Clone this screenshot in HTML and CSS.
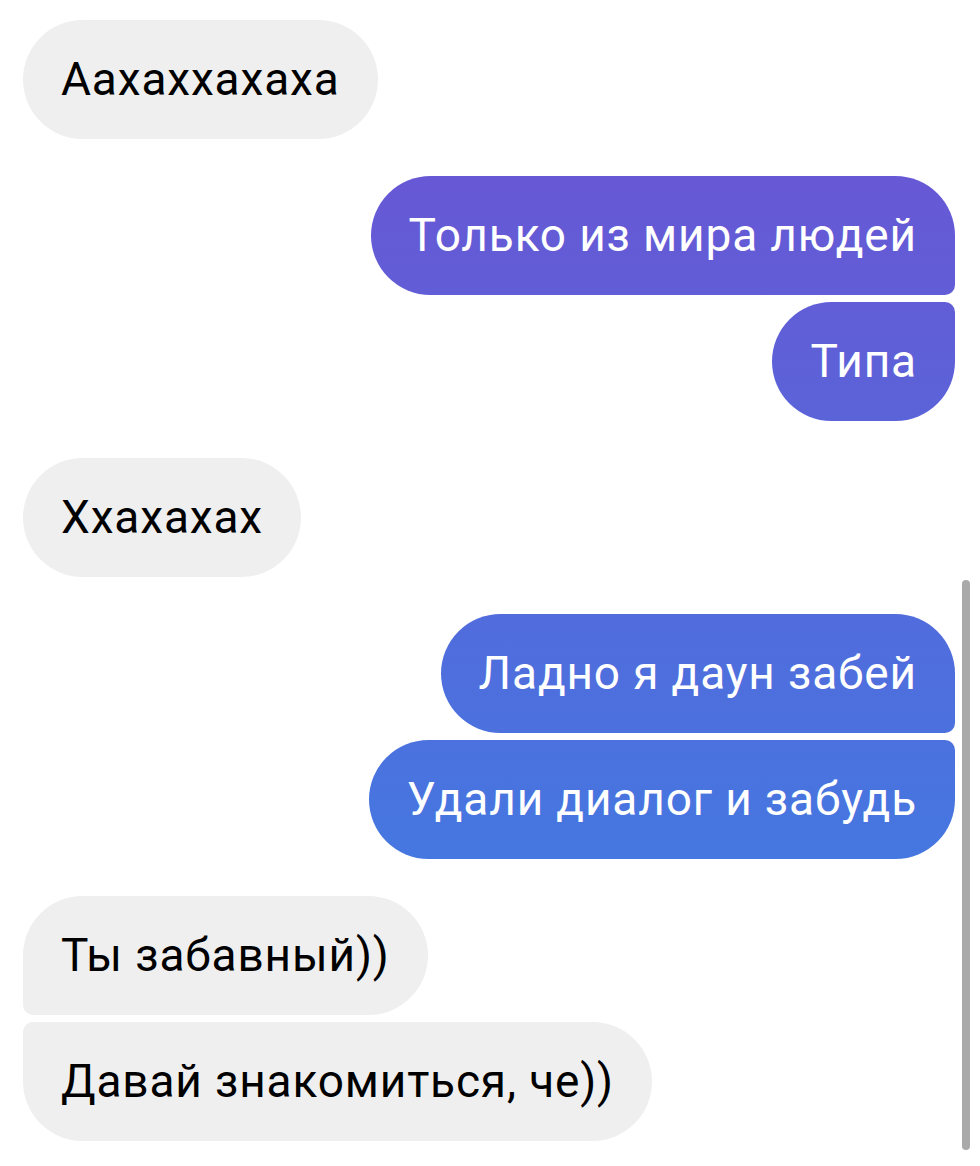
FILE: index.html
```html
<!DOCTYPE html>
<html lang="ru">
<head>
    <meta charset="UTF-8">
    <title>Диалог</title>
    <link rel="stylesheet" href="styles.css">
</head>
<body>
    <div class="chat">
        <div class="group in">
            <div class="bubble">Аахаххахаха</div>
        </div>
        <div class="group out">
            <div class="bubble">Только из мира людей</div>
            <div class="bubble">Типа</div>
        </div>
        <div class="group in">
            <div class="bubble">Ххахахах</div>
        </div>
        <div class="group out">
            <div class="bubble">Ладно я даун забей</div>
            <div class="bubble">Удали диалог и забудь</div>
        </div>
        <div class="group in">
            <div class="bubble">Ты забавный))</div>
            <div class="bubble">Давай знакомиться, че))</div>
        </div>
    </div>
    <div class="scrollbar"></div>
</body>
</html>
```

FILE: styles.css
```css
body {
    margin: 0;
    background: #fff;
    font-family: Roboto, "Noto Sans", sans-serif;
    overflow: hidden;
}

.chat {
    display: flex;
    flex-direction: column;
    gap: 37px;
    padding: 20px 25px 0 23px;
}

.group {
    display: flex;
    flex-direction: column;
    gap: 7px;
}

.group.in {
    align-items: flex-start;
}

.group.out {
    align-items: flex-end;
}

.bubble {
    padding: 33px 38px;
    line-height: 53px;
    font-size: 46px;
    letter-spacing: 0.85px;
    border-radius: 60px;
    white-space: nowrap;
}

.in .bubble {
    background: #efefef;
    color: #000;
}

.out .bubble {
    color: #fff;
    background: linear-gradient(180deg, #7050d2 0%, #3685e5 100%) fixed;
}

.out .bubble:first-child:not(:last-child) {
    border-bottom-right-radius: 10px;
}

.out .bubble:last-child:not(:first-child) {
    border-top-right-radius: 10px;
}

.in .bubble:first-child:not(:last-child) {
    border-bottom-left-radius: 10px;
}

.in .bubble:last-child:not(:first-child) {
    border-top-left-radius: 10px;
}

.scrollbar {
    position: absolute;
    left: 962px;
    top: 580px;
    width: 8px;
    height: 570px;
    border-radius: 4px;
    background: #a9a9a9;
}
```
